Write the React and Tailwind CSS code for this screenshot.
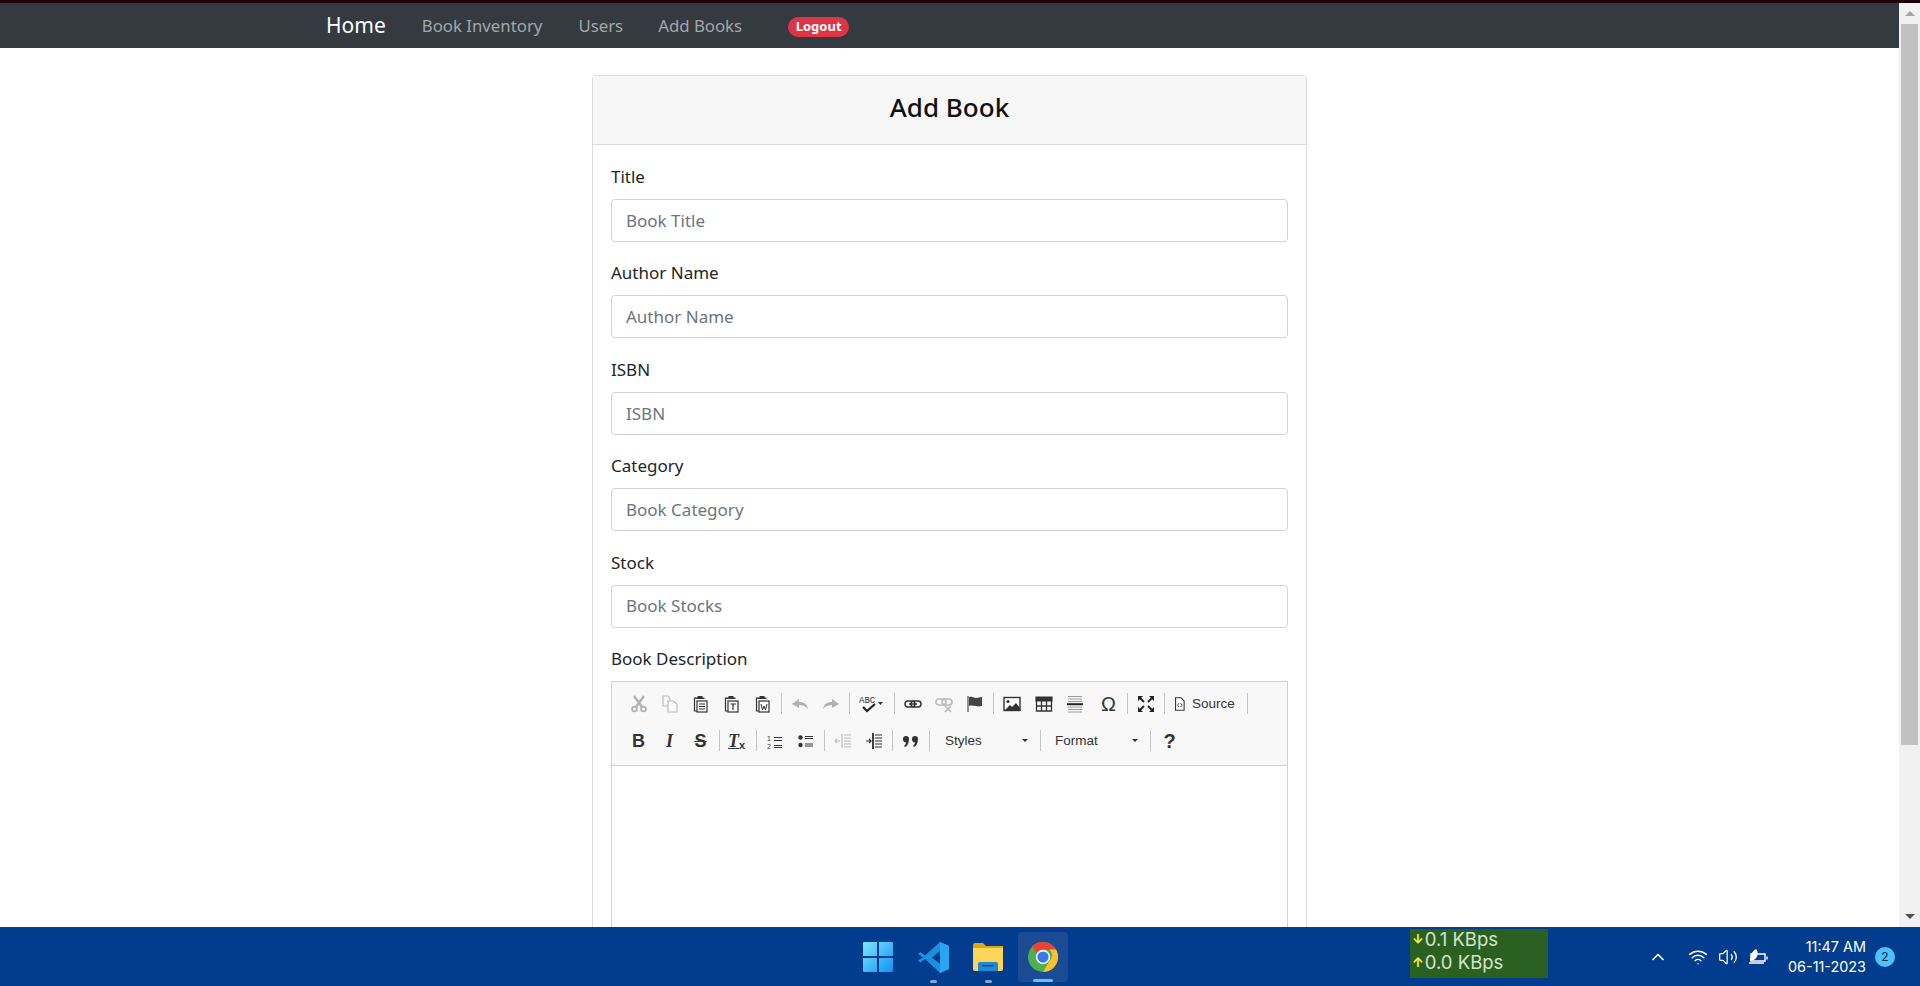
import React from "react";
import { Wifi, Volume2, ChevronUp } from "lucide-react";

const sans = "font-['Noto_Sans',sans-serif]";
const fields = [
  ["Title", "Book Title"],
  ["Author Name", "Author Name"],
  ["ISBN", "ISBN"],
  ["Category", "Book Category"],
  ["Stock", "Book Stocks"],
];

// ckeditor style toolbar icons
const Ico = ({ children, off, w = 18 }) => (
  <svg width={w} height="18" viewBox="0 0 18 18" className={off ? "opacity-30" : ""} fill="none" stroke="#333" strokeWidth="1.2">
    {children}
  </svg>
);

const Paste = ({ off, mark }) => (
  <Ico off={off}>
    <path d="M4 3H2.5v13H5" />
    <path d="M3.5 4h9V2.5h-2V1h-5v1.5h-2z" fill="#333" stroke="none" />
    <rect x="5" y="6" width="10" height="11" fill="#fff" />
    {mark}
  </Ico>
);

const Cut = ({ off }) => (
  <Ico off={off}>
    <path d="M4 1l8 11M14 1L6 12" strokeWidth="2.4" stroke="#111" />
    <circle cx="4.5" cy="14" r="2.4" strokeWidth="1.8" stroke="#111" />
    <circle cx="13.5" cy="14" r="2.4" strokeWidth="1.8" stroke="#111" />
  </Ico>
);

const Copy = ({ off }) => (
  <Ico off={off}>
    <path d="M2 1h5l2 3v7H2z" />
    <path d="M7 6h5l4 3v8H7z" fill="#fff" />
  </Ico>
);

const Arrow = ({ off, flip }) => (
  <Ico off={off}>
    <path d={flip ? "M17 9l-7-5v3C5 7 2 9 1 14c3-3 5-4 9-4v3z" : "M1 9l7-5v3c5 0 8 2 9 7-3-3-5-4-9-4v3z"} fill="#111" stroke="none" />
  </Ico>
);

const Letter = ({ children, cls = "" }) => (
  <span className={`font-['Liberation_Sans',sans-serif] text-[#333] leading-none ${cls}`}>{children}</span>
);

const Lines = ({ ys, x1 = 8, x2 = 17, sw = 1.2 }) => (
  <path d={ys.map((y) => `M${x1} ${y}H${x2}`).join("")} strokeWidth={sw} />
);

const Sep = () => (
  <div className="w-[6px] flex justify-center shrink-0">
    <div className="w-px h-[21px] bg-[#c4c4c4]" />
  </div>
);

const Btn = ({ children, w = "w-[31px]" }) => (
  <div className={`${w} h-[24px] flex items-center justify-center shrink-0`}>{children}</div>
);

const Caret = () => <span className="w-0 h-0 border-x-[3px] border-x-transparent border-t-[3px] border-t-[#2f2f2f]" />;

const Toolbar = () => (
  <div className="h-[84px] bg-[#f8f8f8] border-b border-[#d1d1d1] pl-[11px] pt-[10px] flex flex-col gap-[13px]">
    <div className="flex items-center">
      <Btn><Cut off /></Btn>
      <Btn><Copy off /></Btn>
      <Btn><Paste mark={<Lines ys={[9, 11.5, 14]} x1={7} x2={13} />} /></Btn>
      <Btn><Paste mark={<path d="M7.5 9H13M10 9v6" />} /></Btn>
      <Btn><Paste mark={<path d="M7 9l1.5 6L10 11l1.5 4L13 9" strokeWidth="1" />} /></Btn>
      <Sep />
      <Btn><Arrow off /></Btn>
      <Btn><Arrow off flip /></Btn>
      <Sep />
      <Btn w="w-[39px]">
        <svg width="26" height="18" viewBox="0 0 26 18" fill="none">
          <text x="0" y="8" fontSize="9" fill="#333" fontFamily="Liberation Mono">ABC</text>
          <path d="M4 12l4 4 8-7" stroke="#222" strokeWidth="2.2" />
          <path d="M19 7h5l-2.5 3z" fill="#333" />
        </svg>
      </Btn>
      <Sep />
      <Btn>
        <Ico>
          <rect x="1" y="6" width="10" height="6" rx="3" strokeWidth="1.5" />
          <rect x="7" y="6" width="10" height="6" rx="3" strokeWidth="1.5" />
          <path d="M5 9h8" strokeWidth="1.5" />
        </Ico>
      </Btn>
      <Btn>
        <Ico off>
          <rect x="1" y="4" width="10" height="6" rx="3" strokeWidth="1.7" />
          <rect x="7" y="4" width="10" height="6" rx="3" strokeWidth="1.7" />
          <path d="M10 11l6 6M16 11l-6 6" strokeWidth="1.7" />
        </Ico>
      </Btn>
      <Btn>
        <Ico>
          <path d="M2 1v16" strokeWidth="1.6" stroke="#777" />
          <path d="M3 2c4-1 5 1 7 1s4-1 6-1v9c-3 1-4 0-6 0s-4-1-7 0z" fill="#444" stroke="none" />
        </Ico>
      </Btn>
      <Sep />
      <Btn w="w-[32px]">
        <Ico>
          <rect x="1" y="2.5" width="16" height="13" fill="#fff" strokeWidth="1.4" />
          <circle cx="5" cy="6.5" r="1.6" fill="#333" stroke="none" />
          <path d="M2 15l5-5 2 2 4-4 4 5v2z" fill="#333" stroke="none" />
        </Ico>
      </Btn>
      <Btn>
        <Ico>
          <path d="M1 2h16v4H1z" fill="#333" />
          <path d="M1.5 6v10h15V6M1.5 11h15M6.5 6v10M11.5 6v10" strokeWidth="1.3" />
        </Ico>
      </Btn>
      <Btn>
        <Ico>
          <path d="M2 1.5h14M2 4h14M2 6.5h14M2 12h14M2 14.5h14M2 17h14" stroke="#999" />
          <path d="M1 9.2h16" strokeWidth="2" stroke="#222" />
        </Ico>
      </Btn>
      <Btn w="w-[34px]">
        <Letter cls="text-[20px] pl-[3px]">Ω</Letter>
      </Btn>
      <Sep />
      <Btn>
        <Ico>
          <path d="M1 1h5L1 6zM17 1h-5l5 5zM1 17h5l-5-5zM17 17h-5l5-5z" fill="#222" stroke="none" />
          <path d="M3 3l4 4M15 3l-4 4M3 15l4-4M15 15l-4-4" strokeWidth="1.8" stroke="#222" />
        </Ico>
      </Btn>
      <Sep />
      <div className="w-[77px] flex items-center pl-[7px] gap-[4px] shrink-0">
        <Ico w={14}>
          <path d="M2 1h7l4 4v12H2z" fill="#fff" strokeWidth="1.4" />
          <path d="M6.5 8L4.5 10.5 6.5 13M8.5 8l2 2.500-2 2.500" strokeWidth="1.2" />
        </Ico>
        <Letter cls="text-[13.500px]">Source</Letter>
      </div>
      <Sep />
    </div>
    <div className="flex items-center">
      <Btn><Letter cls="text-[18px] font-bold">B</Letter></Btn>
      <Btn><span className="font-['Liberation_Serif',serif] text-[18px] italic font-bold text-[#333] leading-none">I</span></Btn>
      <Btn><Letter cls="text-[18px] font-bold line-through">S</Letter></Btn>
      <Sep />
      <Btn>
        <span className="relative right-[4px] font-['Liberation_Serif',serif] text-[18px] italic font-bold text-[#333] leading-none underline">
          T
          <span className="absolute left-[11px] top-[8px] text-[11px] not-italic font-['Liberation_Sans',sans-serif] no-underline">x</span>
        </span>
      </Btn>
      <Sep />
      <Btn>
        <Ico>
          <Lines ys={[5.500, 8.500, 13.500, 15.500]} x1={8} x2={16} />
          <text x="1" y="9" fontSize="7" fill="#333" stroke="none" fontFamily="Liberation Sans">1</text>
          <text x="1" y="17" fontSize="7" fill="#333" stroke="none" fontFamily="Liberation Sans">2</text>
        </Ico>
      </Btn>
      <Btn>
        <Ico>
          <circle cx="3.500" cy="5.500" r="2.200" fill="#333" stroke="none" />
          <circle cx="3.500" cy="13" r="2.200" fill="#333" stroke="none" />
          <Lines ys={[4.500, 6.500, 12, 14]} x1={8} x2={16} />
        </Ico>
      </Btn>
      <Sep />
      <Btn>
        <Ico off>
          <Lines ys={[3, 6, 9, 12, 15]} x1={10} x2={17} />
          <path d="M8 2v14" />
          <path d="M1 9h5M3 7L1 9l2 2" />
        </Ico>
      </Btn>
      <Btn>
        <Ico>
          <Lines ys={[3, 6, 9, 12, 15]} x1={10} x2={17} />
          <path d="M8 1v16" strokeWidth="1.6" stroke="#111" />
          <path d="M1 9h5M4 7l2 2-2 2" />
        </Ico>
      </Btn>
      <Sep />
      <Btn>
        <Ico>
          <path d="M1 7a3 3 0 116 0c0 4-1.500 7-4 8l-1-1c1-1 2-2 2-3.500a3 3 0 01-3-3.500zM10 7a3 3 0 116 0c0 4-1.500 7-4 8l-1-1c1-1 2-2 2-3.500a3 3 0 01-3-3.500z" fill="#333" stroke="none" />
        </Ico>
      </Btn>
      <Sep />
      <div className="w-[105px] flex items-center justify-between pl-[13px] pr-[9px] shrink-0">
        <Letter cls="text-[13.500px]">Styles</Letter>
        <Caret />
      </div>
      <Sep />
      <div className="w-[104px] flex items-center justify-between pl-[12px] pr-[9px] shrink-0">
        <Letter cls="text-[13.500px]">Format</Letter>
        <Caret />
      </div>
      <Sep />
      <Btn w="w-[33px]"><Letter cls="text-[20px] font-bold">?</Letter></Btn>
    </div>
  </div>
);

const Scrollbar = () => (
  <div className="w-[21px] shrink-0 bg-[#f1f1f1] flex flex-col items-center">
    <div className="h-[21px] flex items-center justify-center">
      <span className="w-0 h-0 border-x-[5px] border-x-transparent border-b-[5px] border-b-[#a3a3a3]" />
    </div>
    <div className="w-[17px] h-[721px] bg-[#c1c1c1]" />
    <div className="flex-1" />
    <div className="h-[21px] flex items-center justify-center">
      <span className="w-0 h-0 border-x-[5px] border-x-transparent border-t-[5px] border-t-[#505050]" />
    </div>
  </div>
);

const Taskbar = () => (
  <div className="h-[59px] shrink-0 bg-[#013c8e] border-t border-[#1a3a6e] flex items-center relative text-white">
    <div className="w-[1410px] flex justify-end shrink-0 items-center h-full pr-[342px]">
      <div className="flex items-center gap-[5px]">
        <div className="w-[50px] h-[50px] flex items-center justify-center relative">
          <svg width="30" height="30" viewBox="0 0 30 30">
            <defs>
              <linearGradient id="win" x1="0" y1="0" x2="1" y2="1">
                <stop offset="0" stopColor="#7fe6fb" />
                <stop offset="1" stopColor="#0f93f2" />
              </linearGradient>
            </defs>
            <path d="M0 1a1 1 0 011-1h13v14H0zM16 0h13a1 1 0 011 1v13H16zM0 16h14v14H1a1 1 0 01-1-1zM16 16h14v13a1 1 0 01-1 1H16z" fill="url(#win)" />
          </svg>
        </div>
        <div className="w-[50px] h-[50px] flex items-center justify-center relative">
          <svg width="31" height="31" viewBox="0 0 31 31">
            <path d="M22 0l9 4v23l-9 4L7 17l-4.500 3.500L0 18.500 5 15.500 0 12l2.500-2L7 13.500zM22 9l-8 6.500 8 6.500z" fill="#1d8fe0" />
            <path d="M22 0l9 4v23l-9 4z" fill="#2aa6f0" />
          </svg>
          <span className="absolute bottom-[-1px] w-[7px] h-[3px] rounded-full bg-[#8ba4c9]" />
        </div>
        <div className="w-[50px] h-[50px] flex items-center justify-center relative">
          <svg width="30" height="28" viewBox="0 0 30 28">
            <path d="M0 2a2 2 0 012-2h8l3 3h17v6H0z" fill="#e3a70b" />
            <path d="M0 5h30v21a2 2 0 01-2 2H2a2 2 0 01-2-2z" fill="#fcd659" />
            <path d="M5 21a2 2 0 012-2h16a2 2 0 012 2v7H5z" fill="#1c8ad6" />
            <rect x="9" y="22" width="12" height="1.500" fill="#0d4c86" />
          </svg>
          <span className="absolute bottom-[-1px] w-[7px] h-[3px] rounded-full bg-[#8ba4c9]" />
        </div>
        <div className="w-[50px] h-[50px] flex items-center justify-center relative bg-[#1b4b95] rounded-[4px]">
          <svg width="30" height="30" viewBox="0 0 48 48">
            <circle cx="24" cy="24" r="24" fill="#4caf50" />
            <path d="M24 0a24 24 0 0120.800 12H24a12 12 0 00-10.400 6L7 6.500A24 24 0 0124 0z" fill="#ea4335" />
            <path d="M44.800 12A24 24 0 0124 48l10.400-18a12 12 0 000-18z" fill="#fbc02d" />
            <circle cx="24" cy="24" r="11.500" fill="#fff" />
            <circle cx="24" cy="24" r="9" fill="#3b78e7" />
          </svg>
          <span className="absolute bottom-0 w-[20px] h-[3px] rounded-full bg-[#5cc6ff]" />
        </div>
      </div>
    </div>
    <div className="w-[138px] h-[49px] mb-[7px] pb-[5px] bg-[#2a6122] shrink-0 flex flex-col justify-center font-['Inter',sans-serif] text-[18.500px] leading-[23px] text-[#d5e3c8] pl-[2px]">
      <div className="flex items-center gap-[1px]"><span className="text-[#f5f53a] text-[13px] font-bold">↓</span>0.1 KBps</div>
      <div className="flex items-center gap-[1px]"><span className="text-[#f5f53a] text-[13px] font-bold">↑</span>0.0 KBps</div>
    </div>
    <div className="ml-[100px]"><ChevronUp size={20} strokeWidth={2} /></div>
    <div className="ml-[20px]"><Wifi size={20} strokeWidth={1.8} /></div>
    <div className="ml-[10px]"><Volume2 size={20} strokeWidth={1.5} /></div>
    <div className="ml-[10px]">
      <svg width="20" height="20" viewBox="0 0 20 20" fill="none" stroke="#fff" strokeWidth="1.4">
        <path d="M1 16h15M3 7h14v7H3zM19 9.500v3" />
        <path d="M3 13c0-6 3-9 5-10 2 3 1 7-2 9z" fill="#fff" />
      </svg>
    </div>
    <div className="w-[98px] text-right font-['Inter',sans-serif] text-[14.400px] leading-[20px] shrink-0">
      <div>11:47 AM</div>
      <div>06-11-2023</div>
    </div>
    <div className="ml-[9px] w-[20px] h-[20px] rounded-full bg-[#4cc2ff] text-[#0b2038] text-[12px] flex items-center justify-center font-['Inter',sans-serif]">2</div>
  </div>
);

export default function App() {
  return (
    <div className={`h-screen flex flex-col overflow-hidden ${sans}`}>
      <div className="h-[3px] shrink-0 bg-[#1c0208]" />
      <div className="flex-1 flex min-h-0">
        <div className="flex-1 min-w-0 overflow-hidden bg-white">
          <nav className="h-[45px] bg-[#343a40] flex items-center pl-[326px] text-[16.800px] text-[#a3a7aa]">
            <span className="text-[21px] text-white mr-[36px]">Home</span>
            <span className="mr-[36px]">Book Inventory</span>
            <span className="mr-[35px]">Users</span>
            <span className="mr-[46px]">Add Books</span>
            <span className="w-[61px] h-[20px] mt-[3px] rounded-full bg-[#dc3545] text-white text-[13px] font-bold flex items-center justify-center">Logout</span>
          </nav>
          <div className="w-[715px] ml-[592px] mt-[27px] border border-[#dcdcdc] rounded-[4px]">
            <div className="h-[69px] pb-[5px] bg-[#f7f7f7] border-b border-[#dcdcdc] flex items-center justify-center text-[26px] font-medium text-[#111]">
              Add Book
            </div>
            <div className="px-[18px] pt-[18px]">
              {fields.map(([label, holder]) => (
                <div key={label} className="mb-[17.400px]">
                  <label className="block text-[17px] leading-[27px] mb-[9px] text-[#212529]">{label}</label>
                  <div className="h-[43px] border border-[#ced4da] rounded-[4px] px-[14px] flex items-center text-[17px] text-[#6c757d]">{holder}</div>
                </div>
              ))}
              <label className="block text-[17px] leading-[27px] mb-[9px] text-[#212529]">Book Description</label>
              <div className="border border-[#d1d1d1] h-[400px]">
                <Toolbar />
              </div>
            </div>
          </div>
        </div>
        <Scrollbar />
      </div>
      <Taskbar />
    </div>
  );
}
